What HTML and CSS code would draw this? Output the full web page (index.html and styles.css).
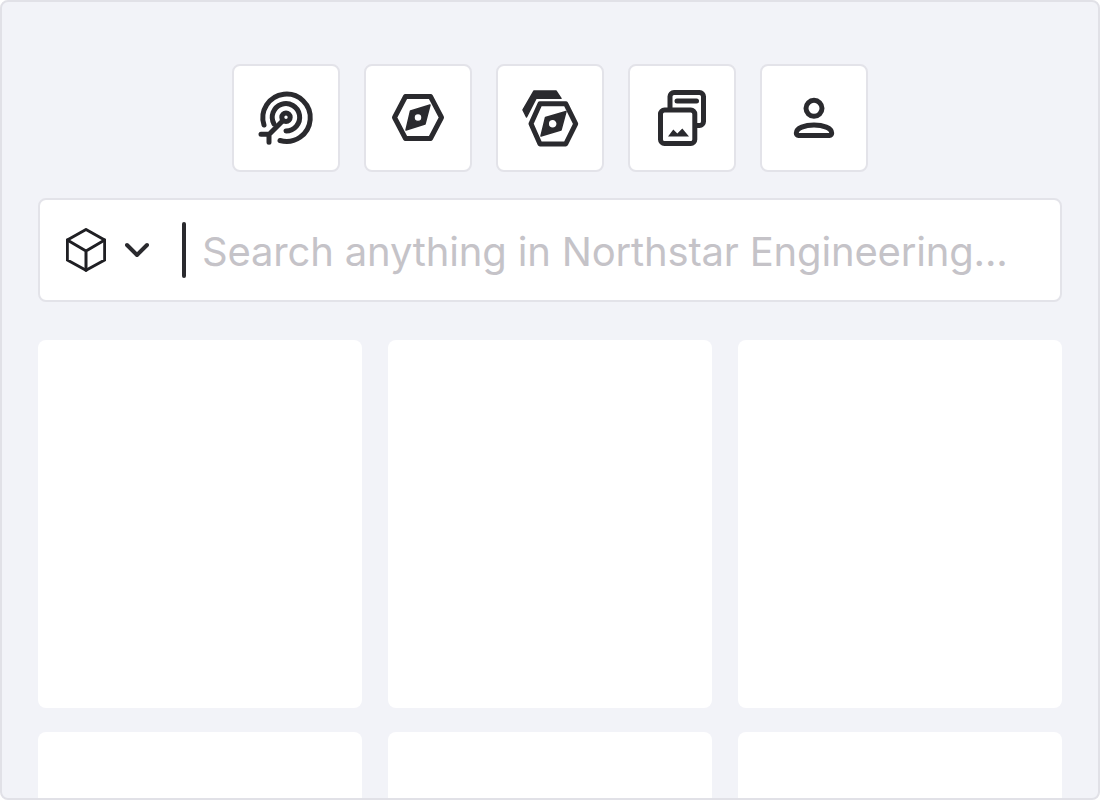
FILE: index.html
```html
<!DOCTYPE html>
<html lang="en">
<head>
    <meta charset="UTF-8">
    <title>Search</title>
    <link rel="stylesheet" href="styles.css">
</head>
<body>
<div class="frame">
    <div class="tabs">
        <div class="tab">
            <svg class="icon" width="60" height="60" viewBox="0 0 60 60">
                <path d="M8 37A23.7 23.7 0 1 1 24 52.5"/>
                <path d="M18 36A13.7 13.7 0 1 1 30 43"/>
                <circle cx="30" cy="29.3" r="4.2"/>
                <path d="M26.5 33L12.5 47M5 46.3H12.3M13 47V54.3"/>
            </svg>
        </div>
        <div class="tab">
            <svg class="icon" width="60" height="60" viewBox="0 0 60 60">
                <path d="M6.500 29.500L17.500 8.500H42.500L53.500 29.500L42.500 50.500H17.500Z"/>
                <path class="solid" fill-rule="evenodd" d="M42 17L37 36L18 42L22.500 23ZM34 29.500A4 4 0 1 0 26 29.500A4 4 0 1 0 34 29.500Z"/>
            </svg>
        </div>
        <div class="tab">
            <svg class="icon" width="60" height="60" viewBox="0 0 60 60">
                <path class="solid" d="M3 22L14 3H36L41 10.300H16L6.500 29Z"/>
                <path d="M11 35.800L20 15.700H45.700L55.700 35.800L45.700 56H20Z"/>
                <path class="solid" fill-rule="evenodd" d="M46 23.500L41 42L21 48L25.500 29.500ZM37.200 35.800A4.500 4.500 0 1 0 28.200 35.800A4.500 4.500 0 1 0 37.200 35.800Z"/>
            </svg>
        </div>
        <div class="tab">
            <svg class="icon" width="60" height="60" viewBox="0 0 60 60">
                <path d="M18 20V8.500A4 4 0 0 1 22 4.500H47.500A4 4 0 0 1 51.500 8.500V33.500A4 4 0 0 1 47.500 37.500H44"/>
                <path d="M25 13H44.500"/>
                <rect x="8.500" y="22" width="34.300" height="33.500" rx="4"/>
                <path class="solid plain" d="M16 48.500L21.300 41.500L25.300 45.500L30.300 40.500L37 48.500Z"/>
            </svg>
        </div>
        <div class="tab">
            <svg class="icon" width="60" height="60" viewBox="0 0 60 60">
                <circle cx="30" cy="20.300" r="8"/>
                <path d="M14.500 47.500H45.500C47 47.500 47.700 46.300 47.700 45C47.700 40 39 37 30 37C21 37 12.300 40 12.300 45C12.300 46.300 13 47.500 14.500 47.500Z"/>
            </svg>
        </div>
    </div>

    <div class="searchBar">
        <svg class="cube" width="40" height="44" viewBox="0 0 40 44">
            <path d="M20 1.500L38.700 12V32L20 42.300L1.300 32V12Z"/>
            <path d="M1.300 12L20 23L38.700 12M20 23V42.300"/>
        </svg>
        <svg class="chevron" width="24" height="16" viewBox="0 0 24 16">
            <path d="M2 3L12 13L22 3"/>
        </svg>
        <span class="caret"></span>
        <span class="placeholder">Search anything in Northstar Engineering...</span>
    </div>

    <div class="cards">
        <div class="card"></div>
        <div class="card"></div>
        <div class="card"></div>
        <div class="card"></div>
        <div class="card"></div>
        <div class="card"></div>
    </div>
</div>
</body>
</html>
```

FILE: styles.css
```css
* {
    margin: 0;
    padding: 0;
    box-sizing: border-box;
}

body {
    background-color: #fff;
    font-family: "Inter", "Liberation Sans", sans-serif;
}

.frame {
    height: 800px;
    padding: 62px 36px 0 36px;
    background: #f2f3f8;
    border: 2px solid #e1e1e7;
    border-radius: 8px;
    overflow: hidden;
}

.tabs {
    display: flex;
    justify-content: center;
    gap: 24px;
}

.tab {
    display: flex;
    align-items: center;
    justify-content: center;
    width: 108px;
    height: 108px;
    background: #fff;
    border: 2px solid #e3e3e9;
    border-radius: 8px;
}

.icon {
    fill: none;
    stroke: #2a2a2e;
    stroke-width: 5;
    stroke-linecap: round;
    stroke-linejoin: round;
}

.icon .solid {
    fill: #2a2a2e;
    stroke-width: 1.5;
}

.icon .plain {
    stroke: none;
}

.icon rect {
    fill: #fff;
}

.searchBar {
    display: flex;
    align-items: center;
    height: 104px;
    margin-top: 26px;
    padding-left: 26px;
    background: #fff;
    border: 2px solid #e3e3e9;
    border-radius: 8px;
}

.cube {
    fill: none;
    stroke: #1f1f23;
    stroke-width: 3;
    stroke-linejoin: round;
    stroke-linecap: round;
}

.chevron {
    margin-left: 19px;
    fill: none;
    stroke: #2a2a2e;
    stroke-width: 4;
    stroke-linecap: round;
    stroke-linejoin: round;
}

.caret {
    width: 4px;
    height: 56px;
    margin-left: 33px;
    margin-right: 16px;
    background: #2a2a2e;
    border-radius: 2px;
}

.placeholder {
    padding-top: 3px;
    color: #c5c3c8;
    font-size: 40px;
    letter-spacing: -0.17px;
    white-space: nowrap;
}

.cards {
    display: grid;
    grid-template-columns: repeat(3, 324px);
    grid-auto-rows: 368px;
    gap: 24px 26px;
    margin-top: 38px;
}

.card {
    background: #fff;
    border-radius: 8px;
}
```
